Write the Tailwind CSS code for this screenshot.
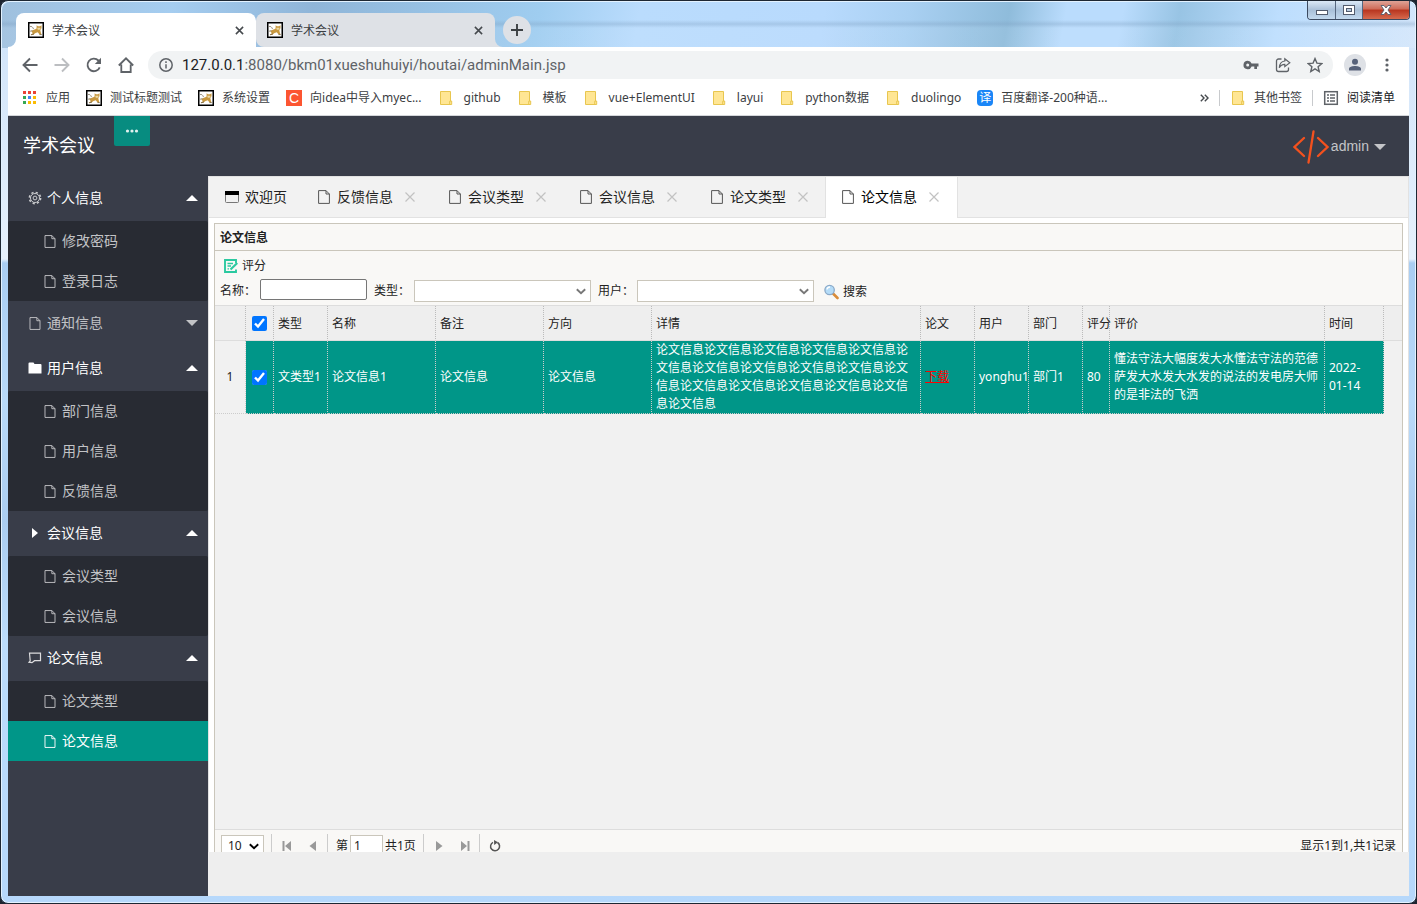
<!DOCTYPE html>
<html lang="zh-CN">
<head>
<meta charset="utf-8">
<title>学术会议</title>
<script src="https://cdn.jsdelivr.net/npm/@tailwindcss/browser@4"></script>
</head>
<body class="h-screen overflow-hidden bg-[#1d2430] font-['Noto_Sans','Noto_Sans_CJK_SC',sans-serif] text-xs text-[#222]">

<svg class="hidden" aria-hidden="true">
  <symbol id="cat" viewBox="0 0 16 16">
    <rect x=".75" y=".75" width="14.5" height="14.5" fill="#fff" stroke="#000" stroke-width="1.5"/>
    <path d="M3.500 9.500C4.500 7.800 7 7.600 8.600 6.500L8.600 3.200 10 4.300H12L13.500 3.200V6.200L12.300 8 12.800 10.500 13.500 12.500H11.500L9.800 10.300 7.500 11 5.500 12.600 2.500 13 4.800 11.300Z" fill="#c8983f"/>
    <path d="M2 4.500C3.500 4 4.800 5 5.500 7" fill="none" stroke="#8d8470" stroke-width=".9"/>
    <path d="M2.200 9.200 4.500 8.700M3 12.800l3-.8M11.500 12.600h2.200" fill="none" stroke="#6e5c3a" stroke-width=".8"/>
    <path d="M9.400 5.800h3v1.300L11 8 9.400 7.200Z" fill="#ecd9a6"/>
  </symbol>
  <symbol id="folder" viewBox="0 0 14 16">
    <path d="M1.500 1.500h10v9.500h1.200v3.500H1.500Z" fill="#ffe694" stroke="#e8c64f"/>
    <path d="M10.700 14.500v-3.300h1" fill="none" stroke="#e8c64f"/>
  </symbol>
  <symbol id="file" viewBox="0 0 12 14">
    <path d="M.6.6H8L11.400 4V13.400H.6ZM8 .6V4H11.400" fill="none" stroke="currentColor" stroke-width="1"/>
  </symbol>
  <symbol id="close" viewBox="0 0 10 10"><path d="M1 1 9 9M9 1 1 9" stroke="currentColor" stroke-width="1.700" fill="none"/></symbol>
  <symbol id="thinx" viewBox="0 0 10 10"><path d="M.5.5 9.500 9.500M9.500.5.5 9.500" stroke="currentColor" stroke-width="1.200" fill="none"/></symbol>
  <symbol id="up" viewBox="0 0 12 6"><path d="M0 6 6 0 12 6Z" fill="currentColor"/></symbol>
  <symbol id="down" viewBox="0 0 12 6"><path d="M0 0H12L6 6Z" fill="currentColor"/></symbol>
  <symbol id="chev" viewBox="0 0 10 6"><path d="M.8.8 5 4.800 9.200.8" stroke="currentColor" stroke-width="1.900" fill="none"/></symbol>
</svg>

<div class="relative flex h-full flex-col rounded-lg border border-[#1d2733] bg-[#b6d8fb] bg-[linear-gradient(180deg,#c4e0fc_0,#d4e6fa_60px,#e6f1fc_258px,#a9cdf2_262px,#b9daf9_400px,#abcdf0_520px,#bcdcfb_640px,#b6d8fb_100%)] px-[7px] pb-[7px] shadow-[inset_0_0_0_1px_#e3f2ff]">

  <!-- caption glass -->
  <div class="pointer-events-none absolute inset-x-px top-px h-[46px] rounded-t-lg bg-[linear-gradient(180deg,transparent_18px,#7f9fbf55_22px,#ffffff10_26px),linear-gradient(100deg,#9fc0de_0%,#a5cdf0_12%,#8fb5d8_22%,#9fcdf0_38%,#badcfd_45%,#b8dafd_58%,#a9d0f2_64%,#8fbcdb_71%,#badcfd_75%,#badcfd_79%,#98c4e4_83%,#bddefe_90%,#d3e6fb_100%)]"></div>

  <!-- window buttons -->
  <div class="absolute top-0 right-[6px] flex h-[19px] overflow-hidden rounded-b border border-t-0 border-[#3c4a60]">
    <button aria-label="最小化" class="flex w-7 items-center justify-center border-r border-[#56677f] bg-linear-to-b from-[#dbe9f7] via-[#a9c0d8] to-[#c3d9ee]"><svg class="h-3 w-3.5" viewBox="0 0 14 12"><rect x="1.500" y="6.500" width="11" height="4" fill="#fff" stroke="#535c6d"/></svg></button>
    <button aria-label="最大化" class="flex w-[27px] items-center justify-center border-r border-[#56677f] bg-linear-to-b from-[#dbe9f7] via-[#a9c0d8] to-[#c3d9ee]"><svg class="h-3 w-3.5" viewBox="0 0 14 12"><rect x="1.500" y="1.500" width="11" height="9" fill="#fff" stroke="#535c6d"/><rect x="4.500" y="4.500" width="5" height="3" fill="#b9cce0" stroke="#535c6d"/></svg></button>
    <button aria-label="关闭" class="flex w-[46px] items-center justify-center bg-[linear-gradient(180deg,#dfa397_0,#cf6b58_45%,#b8351f_50%,#d66a4e_100%)]"><svg class="h-3 w-3.5" viewBox="0 0 14 12"><path d="M2 1.500h3L7 4l2-2.500h3L9 6l3 4.500H9L7 8l-2 2.500H2L5 6Z" fill="#fff" stroke="#535c6d" stroke-width=".9"/></svg></button>
  </div>

  <!-- browser tabs -->
  <div class="relative flex h-[46px] shrink-0 items-end pr-32 pl-2">
    <svg class="absolute bottom-0 left-0 h-2 w-2" viewBox="0 0 8 8"><path d="M8 0V8H0A8 8 0 0 0 8 0Z" fill="#fff"/></svg>
    <div class="flex h-[34px] w-60 items-center rounded-t-lg bg-white pr-3 pl-3">
      <svg class="size-4"><use href="#cat"/></svg>
      <span class="ml-2 flex-1 pt-0.5 leading-4 text-[#3c4043]">学术会议</span>
      <button aria-label="关闭标签页"><svg class="size-[9px] text-[#45494d]"><use href="#close"/></svg></button>
    </div>
    <div class="flex h-[34px] w-[239px] items-center rounded-lg rounded-br-none bg-[#dee1e6] pr-3 pl-[11px]">
      <svg class="size-4"><use href="#cat"/></svg>
      <span class="ml-2 flex-1 pt-0.5 leading-4 text-[#3c4043]">学术会议</span>
      <button aria-label="关闭标签页"><svg class="size-[9px] text-[#45494d]"><use href="#close"/></svg></button>
    </div>
    <svg class="h-2 w-2" viewBox="0 0 8 8"><path d="M0 0V8H8A8 8 0 0 1 0 0Z" fill="#dee1e6"/></svg>
    <button aria-label="新标签页" class="mb-[3px] flex size-7 items-center justify-center rounded-full bg-[#dee1e6]"><svg class="size-3" viewBox="0 0 12 12"><path d="M6 0V12M0 6H12" stroke="#3c4043" stroke-width="1.900"/></svg></button>
  </div>

  <!-- address bar -->
  <div class="relative flex h-9 shrink-0 items-center bg-white pr-3.5 pl-3.5 text-[#5f6368]">
    <button aria-label="后退" class="mr-4"><svg class="size-4" viewBox="0 0 16 16"><path d="M15.500 8H2M8 1.500 1.500 8 8 14.500" fill="none" stroke="#5f6368" stroke-width="1.900"/></svg></button>
    <button aria-label="前进" class="mr-4"><svg class="size-4" viewBox="0 0 16 16"><path d="M.5 8H14M8 1.500 14.500 8 8 14.500" fill="none" stroke="#bcbec1" stroke-width="1.900"/></svg></button>
    <button aria-label="刷新" class="mr-4"><svg class="size-4" viewBox="0 0 16 16"><path d="M13.700 10.300A6.300 6.300 0 1 1 12.400 3.500L14 5.200" fill="none" stroke="#5f6368" stroke-width="1.900"/><path d="M15 .8V7H8.800Z" fill="#5f6368"/></svg></button>
    <button aria-label="主页" class="mr-3.5"><svg class="size-4" viewBox="0 0 16 16"><path d="M3.300 7.500V15H12.700V7.500M.8 8.500 8 1.300 15.200 8.500" fill="none" stroke="#5f6368" stroke-width="1.800"/></svg></button>
    <div class="flex h-7 min-w-0 flex-1 items-center rounded-full bg-[#f1f3f4] pr-[10px] pl-[11px]">
      <svg class="size-3.5 shrink-0" viewBox="0 0 14 14"><circle cx="7" cy="7" r="6.200" fill="none" stroke="#5f6368" stroke-width="1.500"/><path d="M7 6.200V10.500M7 3.300V5" stroke="#5f6368" stroke-width="1.500"/></svg>
      <a href="#" class="ml-[9px] flex-1 font-['Roboto',sans-serif] text-[15px] leading-5 whitespace-nowrap text-[#5f6368]"><span class="text-[#202124]">127.0.0.1</span>:8080/bkm01xueshuhuiyi/houtai/adminMain.jsp</a>
      <button aria-label="密码" class="mr-4"><svg class="size-4" viewBox="0 0 16 16"><path d="M4.700 3.800a4.200 4.200 0 0 1 3.900 2.700H15.500V9.500H14V12H11.300V9.500H8.600A4.200 4.200 0 1 1 4.700 3.800ZM4.700 6.500a1.500 1.500 0 1 0 0 3 1.500 1.500 0 0 0 0-3Z" fill="#5f6368" fill-rule="evenodd"/></svg></button>
      <button aria-label="分享" class="mr-4"><svg class="size-4" viewBox="0 0 16 16"><path d="M6.500 2H3.500A2 2 0 0 0 1.500 4V12.500A2 2 0 0 0 3.500 14.500H11.500A2 2 0 0 0 13.500 12.500V10.500" fill="none" stroke="#5f6368" stroke-width="1.300"/><path d="M9.800 1.800 14.800 5.700 9.800 9.600V7.400C7 7.400 5.500 8.500 4.300 10.800 4.500 7 6.500 4.400 9.800 4Z" fill="none" stroke="#5f6368" stroke-width="1.200"/></svg></button>
      <button aria-label="收藏"><svg class="size-4" viewBox="0 0 16 16"><path d="M8 1.600 9.900 6.100 14.800 6.500 11.100 9.700 12.200 14.500 8 11.900 3.800 14.500 4.900 9.700 1.200 6.500 6.100 6.100Z" fill="none" stroke="#5f6368" stroke-width="1.400"/></svg></button>
    </div>
    <button aria-label="用户" class="ml-[11px]"><svg class="size-[22px]" viewBox="0 0 22 22"><circle cx="11" cy="11" r="11" fill="#dee1e6"/><circle cx="11" cy="7.800" r="3" fill="#566179"/><path d="M5 16.500V14.800C5 12.800 8.500 12 11 12S17 12.800 17 14.800V16.500Z" fill="#566179"/></svg></button>
    <button aria-label="菜单" class="ml-[13px]"><svg class="size-4" viewBox="0 0 16 16" fill="#5f6368"><circle cx="8" cy="3" r="1.600"/><circle cx="8" cy="8" r="1.600"/><circle cx="8" cy="13" r="1.600"/></svg></button>
  </div>

  <!-- bookmarks -->
  <nav class="relative flex h-[33px] shrink-0 items-center gap-4 border-b border-[#d4d6da] bg-white pr-3.5 pb-0.5 pl-3.5 leading-4 whitespace-nowrap text-[#3c4043]">
    <a href="#" class="flex items-center gap-2"><svg class="size-4" viewBox="0 0 16 16"><path d="M1 1h3v3H1zM6 1h3v3H6zM11 1h3v3h-3z" fill="#ea4335"/><path d="M1 6h3v3H1z" fill="#34a853"/><path d="M6 6h3v3H6z" fill="#4285f4"/><path d="M11 6h3v3h-3z" fill="#fbbc04"/><path d="M1 11h3v3H1z" fill="#34a853"/><path d="M6 11h3v3H6zM11 11h3v3h-3z" fill="#fbbc04"/></svg>应用</a>
    <a href="#" class="flex items-center gap-2"><svg class="size-4"><use href="#cat"/></svg>测试标题测试</a>
    <a href="#" class="flex items-center gap-2"><svg class="size-4"><use href="#cat"/></svg>系统设置</a>
    <a href="#" class="flex items-center gap-2"><span class="flex size-4 items-center justify-center bg-[#fc5531] font-['Liberation_Sans',sans-serif] text-sm leading-4 text-white">C</span>向idea中导入myec...</a>
    <a href="#" class="flex items-center gap-2.5"><svg class="h-4 w-4"><use href="#folder"/></svg>github</a>
    <a href="#" class="flex items-center gap-2.5"><svg class="h-4 w-4"><use href="#folder"/></svg>模板</a>
    <a href="#" class="flex items-center gap-2.5"><svg class="h-4 w-4"><use href="#folder"/></svg>vue+ElementUI</a>
    <a href="#" class="flex items-center gap-2.5"><svg class="h-4 w-4"><use href="#folder"/></svg>layui</a>
    <a href="#" class="flex items-center gap-2.5"><svg class="h-4 w-4"><use href="#folder"/></svg>python数据</a>
    <a href="#" class="flex items-center gap-2.5"><svg class="h-4 w-4"><use href="#folder"/></svg>duolingo</a>
    <a href="#" class="flex items-center gap-2"><span class="flex size-4 items-center justify-center rounded-sm bg-[#1a86f7] text-xs leading-4 text-white">译</span>百度翻译-200种语...</a>
    <div class="ml-auto flex items-center gap-2.5">
      <button aria-label="更多书签"><svg class="h-2 w-[9px]" viewBox="0 0 9 8"><path d="M.8.8 4 4 .8 7.200M4.800.8 8 4 4.800 7.200" fill="none" stroke="#45494d" stroke-width="1.400"/></svg></button>
      <span class="h-4 w-px bg-[#c8cacd]"></span>
      <a href="#" class="flex items-center gap-2"><svg class="h-4 w-4"><use href="#folder"/></svg>其他书签</a>
      <span class="h-4 w-px bg-[#c8cacd]"></span>
      <button class="flex items-center gap-2 text-[#202124]"><svg class="size-4" viewBox="0 0 16 16"><rect x="1.700" y="1.700" width="12.600" height="12.600" fill="none" stroke="#5f6368" stroke-width="1.500"/><path d="M4 5h2M4 8h2M4 11h2M7 5h5M7 8h5M7 11h5" stroke="#5f6368" stroke-width="1.400"/></svg>阅读清单</button>
    </div>
  </nav>

  <!-- admin page -->
  <div class="relative flex min-h-0 flex-1 flex-col bg-[#eee]">
    <header class="flex h-[60px] shrink-0 items-start bg-[#393d49] pr-[23px] pl-[15px]">
      <h1 class="w-[91px] text-lg leading-[58px] text-white">学术会议</h1>
      <button aria-label="折叠菜单" class="flex h-[30px] w-9 items-center justify-center rounded-b-xs bg-[#078c80]"><svg class="h-1 w-3.5" viewBox="0 0 14 4" fill="#e2f1ef"><circle cx="2.500" cy="2" r="1.600"/><circle cx="7" cy="2" r="1.600"/><circle cx="11.500" cy="2" r="1.600"/></svg></button>
      <a href="#" class="ml-auto flex h-[60px] items-center font-['Liberation_Sans',sans-serif] text-sm leading-5 text-[#c4c5c8]">
        <svg class="mt-0.5 mr-0.5 h-[34px] w-9" viewBox="0 0 36 34"><path d="M11 8 1.500 17 11 26M25 8 34.500 17 25 26M20.500 1.500 15.500 32.500" fill="none" stroke="#f4511e" stroke-width="2.300" stroke-linecap="round"/></svg>admin<svg class="mt-0.5 ml-[5px] h-1.5 w-3"><use href="#down"/></svg></a>
    </header>

    <div class="flex min-h-0 flex-1">
      <nav class="w-[200px] shrink-0 overflow-hidden bg-[#393d49] text-sm text-[#c2c3c6]">
        <button class="flex h-[45px] w-full items-center pr-2.5 pb-px pl-5 text-white"><svg class="mr-[5px] size-3.5" viewBox="0 0 14 14" fill="none" stroke="#c9cacd"><circle cx="7" cy="7" r="5.600" stroke-width="1.600" stroke-dasharray="2.200 2.200"/><circle cx="7" cy="7" r="4.500"/><circle cx="7" cy="7" r="1.900"/></svg>个人信息<svg class="ml-auto h-1.5 w-3"><use href="#up"/></svg></button>
        <ul class="rounded-xs bg-[#282b33]">
          <li><a href="#" class="flex h-10 items-center gap-1.5 pl-9"><svg class="h-[13px] w-3"><use href="#file"/></svg>修改密码</a></li>
          <li><a href="#" class="flex h-10 items-center gap-1.5 pl-9"><svg class="h-[13px] w-3"><use href="#file"/></svg>登录日志</a></li>
        </ul>
        <button class="flex h-[45px] w-full items-center pr-2.5 pb-px pl-5"><svg class="mr-[5px] h-[13px] w-3.5"><use href="#file"/></svg>通知信息<svg class="ml-auto h-1.5 w-3"><use href="#down"/></svg></button>
        <button class="flex h-[45px] w-full items-center pr-2.5 pb-px pl-5 text-white"><svg class="mr-[5px] h-3 w-3.5" viewBox="0 0 14 12"><path d="M.5 1.500A1 1 0 0 1 1.500.5H5.500L6.500 2H12.500A1 1 0 0 1 13.500 3V11.500H.5Z" fill="#fff"/></svg>用户信息<svg class="ml-auto h-1.5 w-3"><use href="#up"/></svg></button>
        <ul class="rounded-xs bg-[#282b33]">
          <li><a href="#" class="flex h-10 items-center gap-1.5 pl-9"><svg class="h-[13px] w-3"><use href="#file"/></svg>部门信息</a></li>
          <li><a href="#" class="flex h-10 items-center gap-1.5 pl-9"><svg class="h-[13px] w-3"><use href="#file"/></svg>用户信息</a></li>
          <li><a href="#" class="flex h-10 items-center gap-1.5 pl-9"><svg class="h-[13px] w-3"><use href="#file"/></svg>反馈信息</a></li>
        </ul>
        <button class="flex h-[45px] w-full items-center pr-2.5 pb-px pl-5 text-white"><svg class="mr-[5px] h-3 w-3.5" viewBox="0 0 14 12"><path d="M4 1V11L10 6Z" fill="#fff"/></svg>会议信息<svg class="ml-auto h-1.5 w-3"><use href="#up"/></svg></button>
        <ul class="rounded-xs bg-[#282b33]">
          <li><a href="#" class="flex h-10 items-center gap-1.5 pl-9"><svg class="h-[13px] w-3"><use href="#file"/></svg>会议类型</a></li>
          <li><a href="#" class="flex h-10 items-center gap-1.5 pl-9"><svg class="h-[13px] w-3"><use href="#file"/></svg>会议信息</a></li>
        </ul>
        <button class="flex h-[45px] w-full items-center pr-2.5 pb-px pl-5 text-white"><svg class="mr-[5px] h-3 w-3.5" viewBox="0 0 14 12"><path d="M2.500 1.200H12.500V8.700H6.500L4 10.700 1 10.200 2.200 8.800 1.500 1.200Z" fill="none" stroke="#dcdcde" stroke-width="1.200"/></svg>论文信息<svg class="ml-auto h-1.5 w-3"><use href="#up"/></svg></button>
        <ul class="rounded-xs bg-[#282b33]">
          <li><a href="#" class="flex h-10 items-center gap-1.5 pl-9"><svg class="h-[13px] w-3"><use href="#file"/></svg>论文类型</a></li>
          <li><a href="#" class="flex h-10 items-center gap-1.5 bg-[#009688] pl-9 text-white"><svg class="h-[13px] w-3"><use href="#file"/></svg>论文信息</a></li>
        </ul>
      </nav>

      <div class="flex min-w-0 flex-1 flex-col">
        <!-- page tabs -->
        <div class="flex h-[42px] shrink-0 border border-[#e2e2e2] bg-[#f2f2f2] text-sm leading-5 text-[#222]">
          <div class="flex w-[93px] items-center gap-1 pl-4"><svg class="h-3 w-4" viewBox="0 0 16 12"><rect x=".5" y=".5" width="13" height="11" rx="1" fill="none" stroke="#777"/><path d="M0 0H14V4H0Z" fill="#000"/></svg><a href="#">欢迎页</a></div>
          <div class="flex w-[131px] items-center pl-4"><svg class="mr-[7px] h-3.5 w-3 text-[#555]"><use href="#file"/></svg><a href="#">反馈信息</a><button aria-label="关闭" class="ml-3"><svg class="size-2.5 text-[#c2c2c2]"><use href="#thinx"/></svg></button></div>
          <div class="flex w-[131px] items-center pl-4"><svg class="mr-[7px] h-3.5 w-3 text-[#555]"><use href="#file"/></svg><a href="#">会议类型</a><button aria-label="关闭" class="ml-3"><svg class="size-2.5 text-[#c2c2c2]"><use href="#thinx"/></svg></button></div>
          <div class="flex w-[131px] items-center pl-4"><svg class="mr-[7px] h-3.5 w-3 text-[#555]"><use href="#file"/></svg><a href="#">会议信息</a><button aria-label="关闭" class="ml-3"><svg class="size-2.5 text-[#c2c2c2]"><use href="#thinx"/></svg></button></div>
          <div class="flex w-[131px] items-center pl-4"><svg class="mr-[7px] h-3.5 w-3 text-[#555]"><use href="#file"/></svg><a href="#">论文类型</a><button aria-label="关闭" class="ml-3"><svg class="size-2.5 text-[#c2c2c2]"><use href="#thinx"/></svg></button></div>
          <div class="-mb-px -ml-px flex w-[133px] items-center border-x border-[#e2e2e2] bg-white pb-px pl-4 text-black"><svg class="mr-[7px] h-3.5 w-3 text-[#555]"><use href="#file"/></svg><a href="#">论文信息</a><button aria-label="关闭" class="ml-3"><svg class="size-2.5 text-[#c2c2c2]"><use href="#thinx"/></svg></button></div>
        </div>

        <!-- grid panel, its lower edge runs under the frame -->
        <main class="mb-11 flex min-h-0 flex-1 flex-col overflow-hidden border-x border-[#e2e2e2] bg-white px-[5px] pt-[5px]">
          <section class="-mb-2 flex flex-1 shrink-0 flex-col border border-[#cac6bb] bg-[#f1f1f1]">
            <h2 class="h-[27px] border-b border-[#cac6bb] bg-[#f9f8f6] pl-[5px] leading-[27px] font-bold">论文信息</h2>
            <div class="border-b border-[#ddd] bg-[#f9f8f6] pl-[5px]">
              <button class="flex h-7 items-center gap-1 pt-px pl-1"><svg class="size-3.5" viewBox="0 0 14 14" fill="none" stroke="#2bc9a0"><path d="M12 4V1H1V13H12V10.500" stroke-width="1.900"/><path d="M3.500 4.500H9M3.500 7H7M3.500 9.800H5" stroke-width="1.300"/><path d="M6.500 10.500 13.300 4" stroke-width="2.200"/></svg>评分</button>
              <form class="flex h-[26px] items-start leading-6">
                <label for="nm" class="w-10">名称：</label>
                <input id="nm" class="h-[21px] w-[107px] rounded-xs border border-[#767676] bg-white">
                <label for="tp" class="ml-[7px] w-10">类型：</label>
                <span class="relative mt-px"><select id="tp" class="block h-[22px] w-[177px] appearance-none border border-[#cac6bb] bg-white"><option></option></select><svg class="pointer-events-none absolute top-2 right-[5px] h-[7px] w-2.5 text-[#777]"><use href="#chev"/></svg></span>
                <label for="us" class="ml-[7px] w-[39px]">用户：</label>
                <span class="relative mt-px"><select id="us" class="block h-[22px] w-[177px] appearance-none border border-[#cac6bb] bg-white"><option></option></select><svg class="pointer-events-none absolute top-2 right-[5px] h-[7px] w-2.5 text-[#777]"><use href="#chev"/></svg></span>
                <button type="button" class="mt-0.5 ml-2.5 flex h-[22px] items-center gap-1"><svg class="h-4 w-[15px]" viewBox="0 0 15 16"><path d="M9 9.500 13.500 14" stroke="#d98c3a" stroke-width="2.600" stroke-linecap="round"/><circle cx="5.600" cy="6" r="4.700" fill="#b5dcf8" stroke="#8aa9c8" stroke-width="1.300"/><path d="M3 5.500A3 3 0 0 1 6 3" stroke="#fff" stroke-width="1.300" fill="none"/></svg>搜索</button>
              </form>
            </div>
            <table class="w-full table-fixed border-separate border-spacing-0 text-left">
              <colgroup><col class="w-[31px]"><col class="w-7"><col class="w-[54px]"><col class="w-[108px]"><col class="w-[108px]"><col class="w-[108px]"><col class="w-[269px]"><col class="w-[54px]"><col class="w-[54px]"><col class="w-[54px]"><col class="w-[27px]"><col class="w-[215px]"><col class="w-[59px]"><col></colgroup>
              <thead>
                <tr class="h-[35px] bg-[#eee] whitespace-nowrap *:border-r *:border-b *:border-r-[#bbb] *:border-b-[#ddd] *:[border-right-style:dotted] *:pt-0.5 *:pl-1 *:font-normal">
                  <th></th><th class="pt-0!"><input type="checkbox" checked aria-label="全选" class="ml-0.5 block size-[15px]"></th><th>类型</th><th>名称</th><th>备注</th><th>方向</th><th>详情</th><th>论文</th><th>用户</th><th>部门</th><th>评分</th><th>评价</th><th>时间</th><th class="border-r-0!"></th>
                </tr>
              </thead>
              <tbody>
                <tr class="h-[73px] leading-[18px] text-white *:border-r *:border-b *:border-dotted *:border-[#ccc] *:bg-[#009688] *:pl-1">
                  <td class="bg-[#f1f1f1]! pl-0! text-center text-[#222]">1</td>
                  <td><input type="checkbox" checked aria-label="选择第1行" class="ml-0.5 block size-[15px]"></td>
                  <td class="whitespace-nowrap">文类型1</td><td>论文信息1</td><td>论文信息</td><td>论文信息</td>
                  <td class="pr-3">论文信息论文信息论文信息论文信息论文信息论文信息论文信息论文信息论文信息论文信息论文信息论文信息论文信息论文信息论文信息论文信息论文信息</td>
                  <td><a href="#" class="text-[#f00] underline">下载</a></td>
                  <td class="whitespace-nowrap">yonghu1</td><td>部门1</td><td>80</td>
                  <td class="pr-1">懂法守法大幅度发大水懂法守法的范德萨发大水发大水发的说法的发电房大师的是非法的飞洒</td>
                  <td>2022-<br>01-14</td><td class="border-0! bg-transparent!"></td>
                </tr>
              </tbody>
            </table>
            <footer class="mt-auto flex h-[30px] items-center border-t border-[#ddd] bg-[#f9f8f6] pt-0.5 pr-1.5 pl-1.5 leading-5">
              <span class="relative"><select aria-label="每页条数" class="block h-[22px] w-[43px] appearance-none border border-[#cac6bb] bg-white pl-1.5"><option>10</option></select><svg class="pointer-events-none absolute top-2 right-[5px] h-[7px] w-2.5 text-black"><use href="#chev"/></svg></span>
              <span class="ml-[7px] h-6 w-px bg-[#ccc]"></span>
              <button aria-label="首页" class="ml-2.5"><svg class="h-2.5 w-2.5" viewBox="0 0 10 10"><path d="M.5 0H2.500V10H.5ZM9 0V10L3 5Z" fill="#999"/></svg></button>
              <button aria-label="上一页" class="ml-4"><svg class="h-2.5 w-2.5" viewBox="0 0 10 10"><path d="M8 0V10L1.500 5Z" fill="#999"/></svg></button>
              <span class="ml-[9px] h-6 w-px bg-[#ccc]"></span>
              <label for="pg" class="ml-2 w-3.5">第</label>
              <input id="pg" value="1" class="h-[22px] w-[33px] border border-[#cac6bb] bg-white pl-[3px]">
              <span class="ml-0.5 w-[38px] whitespace-nowrap">共1页</span>
              <span class="h-6 w-px bg-[#ccc]"></span>
              <button aria-label="下一页" class="ml-2.5"><svg class="h-2.5 w-2.5" viewBox="0 0 10 10"><path d="M2 0V10L8.500 5Z" fill="#999"/></svg></button>
              <button aria-label="末页" class="ml-4"><svg class="h-2.5 w-2.5" viewBox="0 0 10 10"><path d="M7.500 0H9.500V10H7.500ZM1 0V10L7 5Z" fill="#999"/></svg></button>
              <span class="ml-[9px] h-6 w-px bg-[#ccc]"></span>
              <button aria-label="刷新" class="ml-[9px]"><svg class="size-3" viewBox="0 0 12 12"><path d="M4 2.300A4.500 4.500 0 1 0 8.500 2.500" fill="none" stroke="#555" stroke-width="1.500"/><path d="M5 0 9 2.300 5.200 5Z" fill="#555"/></svg></button>
              <span class="ml-auto">显示1到1,共1记录</span>
            </footer>
          </section>
        </main>
      </div>
    </div>
  </div>
</div>
</body>
</html>
